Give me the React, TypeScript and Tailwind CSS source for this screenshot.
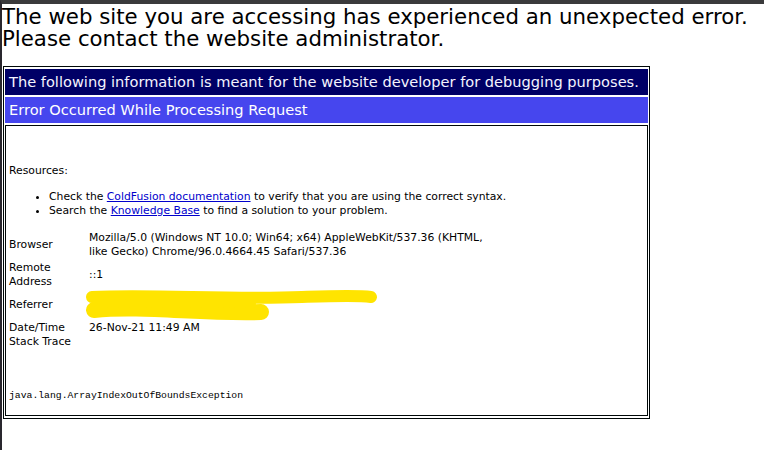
import React from "react";

const verdana = { fontFamily: '"DejaVu Sans", Verdana, sans-serif' };

type InfoRow = { label: React.ReactNode; value: React.ReactNode; lines: number };

const rows: InfoRow[] = [
  {
    label: "Browser",
    value: (
      <>
        Mozilla/5.0 (Windows NT 10.0; Win64; x64) AppleWebKit/537.36 (KHTML,
        <br />
        like Gecko) Chrome/96.0.4664.45 Safari/537.36
      </>
    ),
    lines: 2,
  },
  {
    label: (
      <>
        Remote
        <br />
        Address
      </>
    ),
    value: "::1",
    lines: 2,
  },
  { label: "Referrer", value: "", lines: 2 },
  { label: "Date/Time", value: "26-Nov-21 11:49 AM", lines: 1 },
];

function Scribble() {
  // yellow marker stroke hiding the referrer value
  return (
    <svg
      className="absolute left-0 top-0 pointer-events-none"
      width="764"
      height="450"
      viewBox="0 0 764 450"
    >
      <path
        d="M90 293 C150 290 230 296 300 293 C330 292 355 291 369 293"
        stroke="#ffe400"
        strokeWidth="12"
        strokeLinecap="round"
        fill="none"
      />
      <path
        d="M92 306 C140 301 200 310 259 308"
        stroke="#ffe400"
        strokeWidth="16"
        strokeLinecap="round"
        fill="none"
      />
      <path d="M95 299 L250 300" stroke="#ffe400" strokeWidth="8" strokeLinecap="round" fill="none" />
    </svg>
  );
}

export default function App() {
  return (
    <div className="relative min-h-[450px] w-[764px] bg-white border-t-4 border-t-[#3a3a3c] border-l-2 border-l-[#29272e]">
      <div style={verdana} className="pt-[2px] text-[21.3px] leading-[22px] text-black">
        <div>The web site you are accessing has experienced an unexpected error.</div>
        <div>Please contact the website administrator.</div>
      </div>

      <div className="mt-[16px] ml-[1px] w-[647px] border border-[#000808] px-[1px] py-[2px] flex flex-col gap-[2px]">
        <div
          style={verdana}
          className="h-[26px] flex items-center px-[4px] bg-[#000066] text-[#f4f4ff] text-[14.6px]"
        >
          The following information is meant for the website developer for debugging purposes.
        </div>
        <div
          style={verdana}
          className="h-[26px] flex items-center px-[4px] bg-[#4646ee] text-white text-[14.6px]"
        >
          Error Occurred While Processing Request
        </div>
        <div
          style={verdana}
          className="h-[291px] border border-[#000808] p-[3px] text-[10.8px] leading-[14px] text-black"
        >
          <div className="pt-[35px]">Resources:</div>
          <ul className="mt-[12px] list-disc pl-[40px]">
            <li>
              Check the <span className="text-[#0000cc] underline">ColdFusion documentation</span> to
              verify that you are using the correct syntax.
            </li>
            <li>
              Search the <span className="text-[#0000cc] underline">Knowledge Base</span> to find a
              solution to your problem.
            </li>
          </ul>

          <div className="mt-[13px] flex flex-col gap-[2px]">
            {rows.map((r, i) => (
              <div key={i} className="flex items-center">
                <div className="w-[80px] shrink-0">{r.label}</div>
                <div className={r.lines === 2 ? "min-h-[28px] flex items-center" : ""}>
                  <div>{r.value}</div>
                </div>
              </div>
            ))}
            <div className="-mt-[2px]">Stack Trace</div>
          </div>

          <div
            className="mt-[40px] text-[9.75px] leading-[14px]"
            style={{ fontFamily: '"Liberation Mono", monospace' }}
          >
            java.lang.ArrayIndexOutOfBoundsException
          </div>
        </div>
      </div>

      <Scribble />
    </div>
  );
}
